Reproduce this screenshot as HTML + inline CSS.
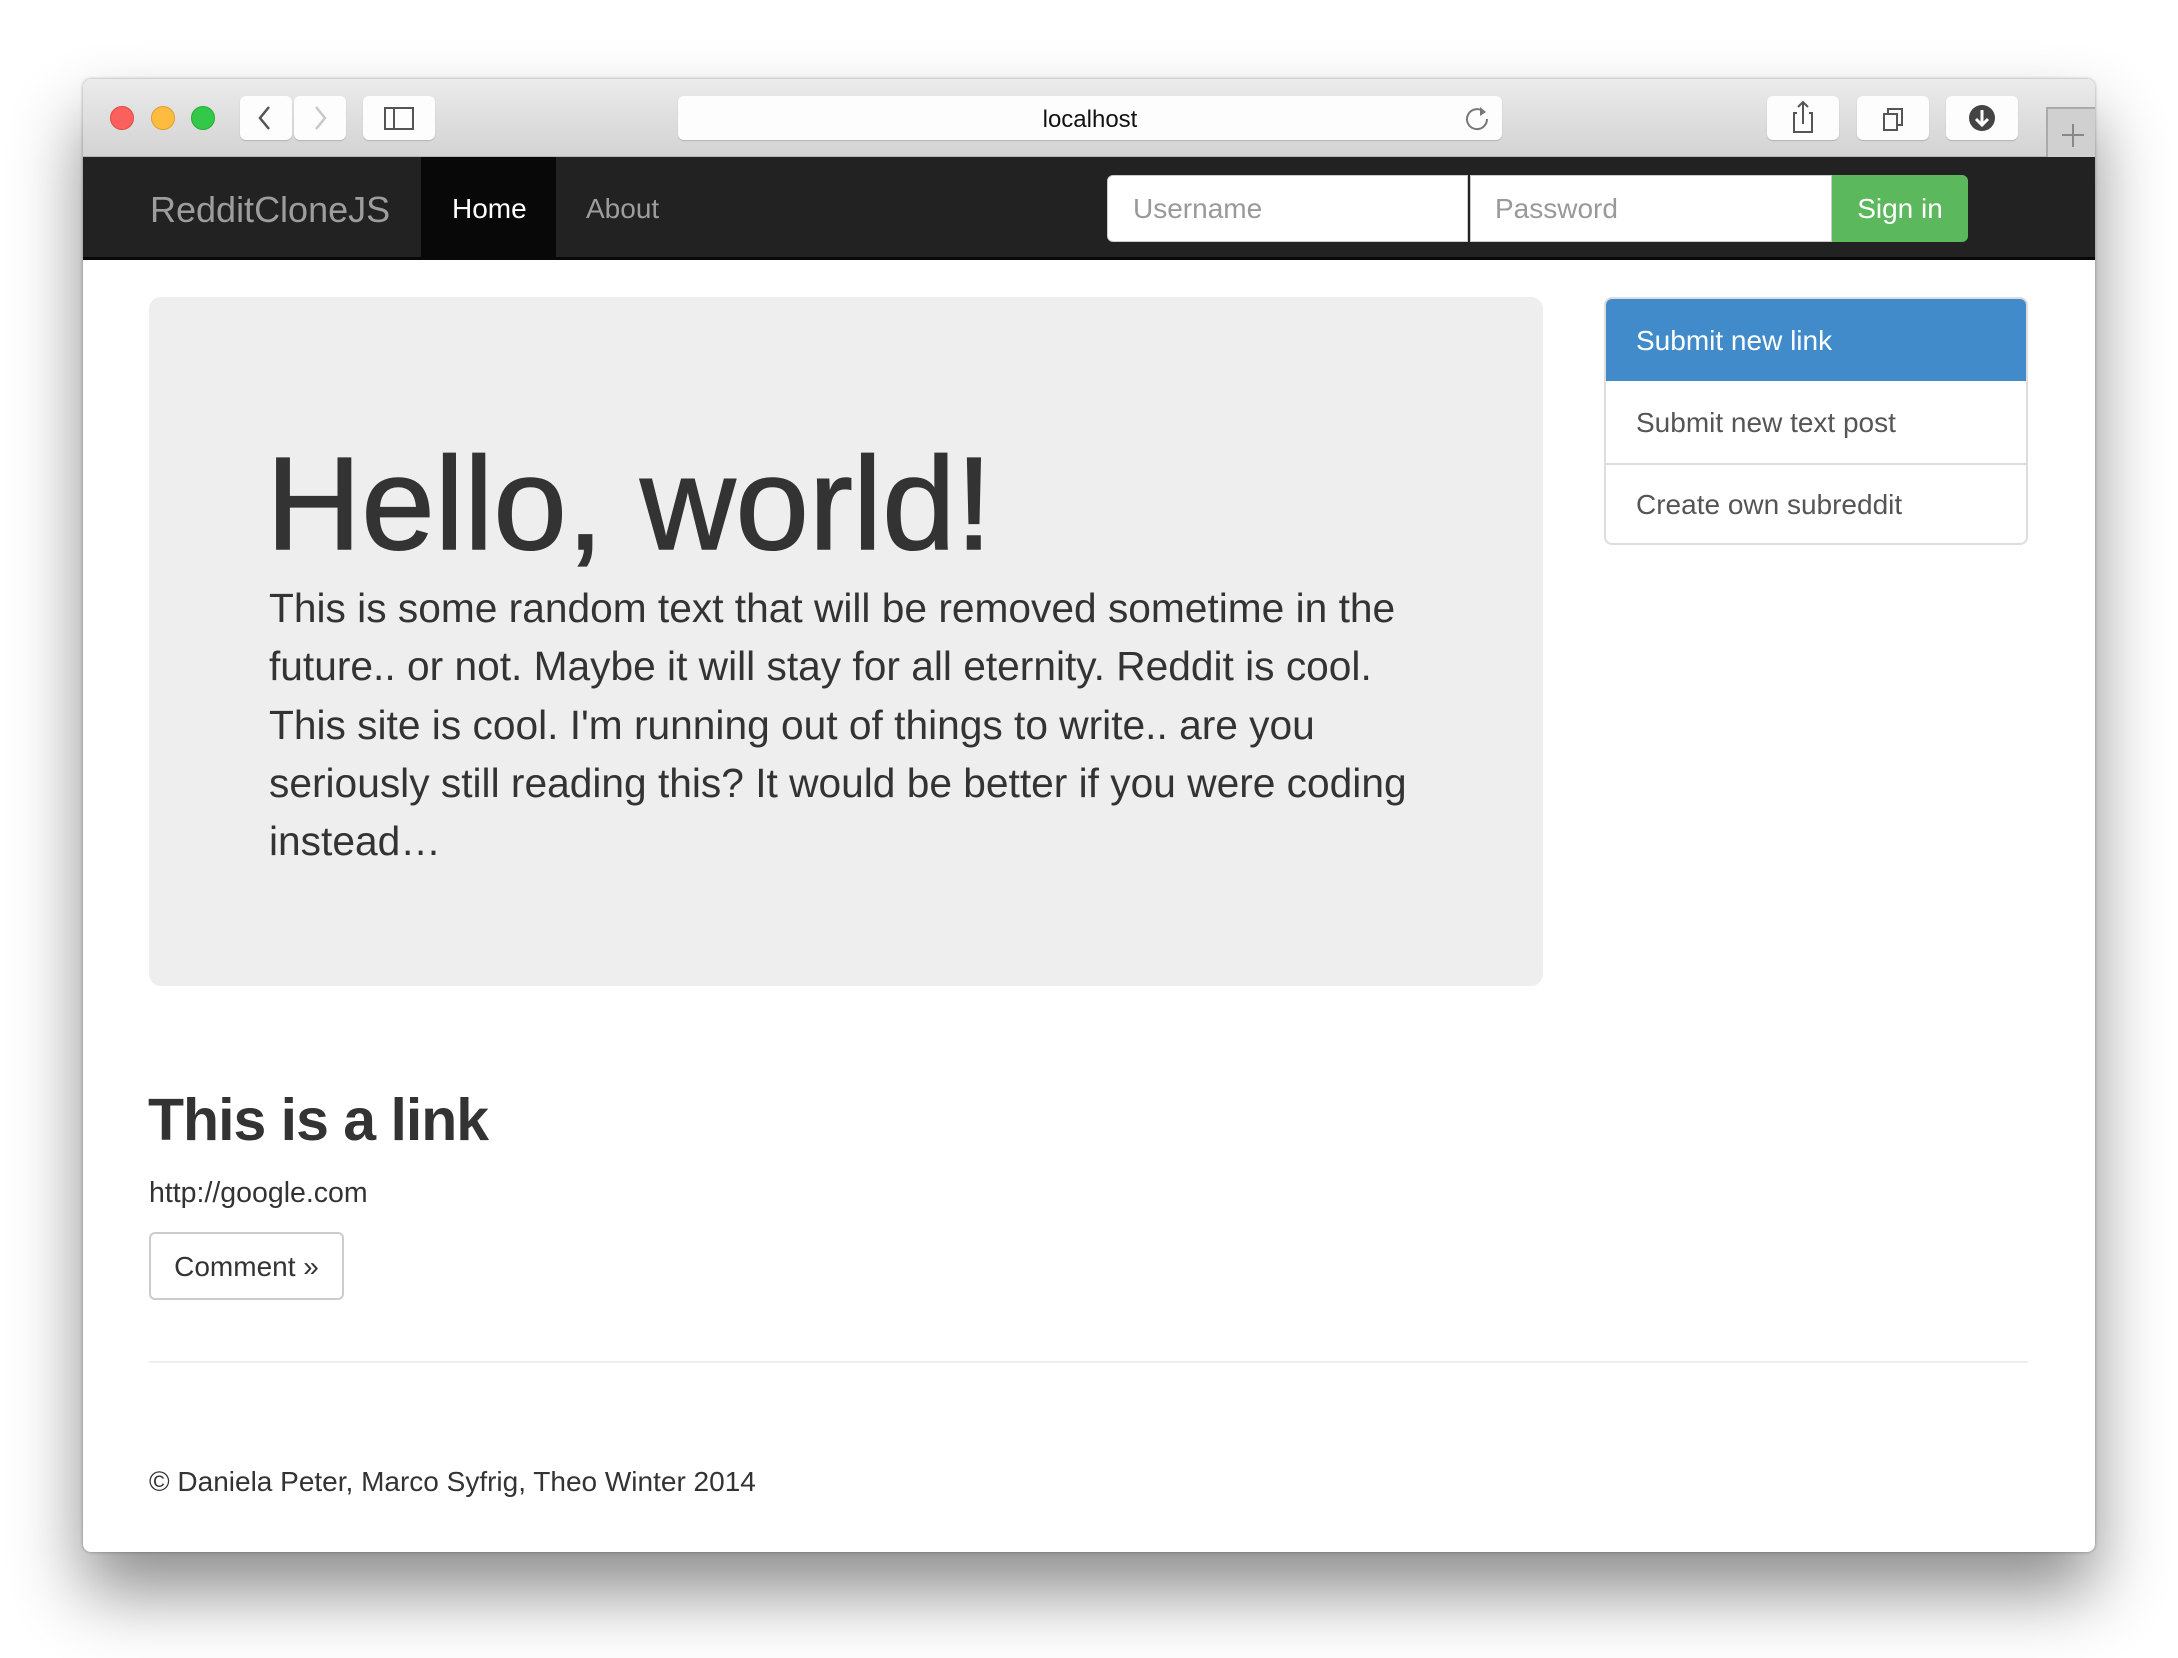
<!DOCTYPE html>
<html><head><meta charset="utf-8"><style>
*{margin:0;padding:0;box-sizing:border-box}
body{width:2178px;height:1658px;background:#fff;position:relative;overflow:hidden;font-family:"Liberation Sans",Arial,sans-serif;color:#333}
.a{position:absolute;white-space:nowrap;line-height:1}
#win{position:absolute;left:83px;top:79px;width:2012px;height:1473px;background:#fff;border-radius:8px;box-shadow:0 40px 70px rgba(0,0,0,.45),0 0 3px rgba(0,0,0,.35);overflow:hidden}
#tb{position:absolute;left:0;top:0;width:100%;height:78px;background:linear-gradient(#ebebeb,#d3d3d3);border-bottom:1px solid #b5b5b5}
.dot{position:absolute;width:24px;height:24px;border-radius:50%;top:27px}
.btn{position:absolute;top:17px;height:44px;background:#fdfdfd;border-radius:6px;box-shadow:0 1px 1px rgba(0,0,0,.18)}
#nav{position:absolute;left:0;top:78px;width:100%;height:103px;background:#222;border-bottom:3px solid #080808}
</style></head><body>
<div id="win">
 <div id="tb">
  <div class="dot" style="left:27px;background:#fc605c;border:1px solid #de4a45"></div>
  <div class="dot" style="left:68px;background:#fdbc40;border:1px solid #de9e2c"></div>
  <div class="dot" style="left:108px;background:#34c84a;border:1px solid #26a934"></div>
  <div class="btn" style="left:157px;width:52px"><svg width="52" height="44"><path d="M29 11 L20 22 L29 33" stroke="#555" stroke-width="2.5" fill="none"/></svg></div>
  <div class="btn" style="left:211px;width:52px"><svg width="52" height="44"><path d="M22 11 L31 22 L22 33" stroke="#c8c8c8" stroke-width="2.5" fill="none"/></svg></div>
  <div class="btn" style="left:280px;width:72px"><svg width="72" height="44"><rect x="22" y="12" width="28" height="21" stroke="#555" stroke-width="2" fill="none"/><line x1="31" y1="12" x2="31" y2="33" stroke="#555" stroke-width="2"/></svg></div>
  <div class="btn" style="left:595px;width:824px"></div>
  <div class="a" style="left:595px;width:824px;text-align:center;top:29px;font-size:24px;color:#111">localhost</div>
  <svg class="a" style="left:1380px;top:25px" width="30" height="30"><path d="M21 8 A10 10 0 1 0 24 15" stroke="#777" stroke-width="2" fill="none"/><path d="M17 3 L23 8 L17 12" fill="#777"/></svg>
  <div class="btn" style="left:1684px;width:72px"><svg width="72" height="44"><path d="M30 17 H27 V36 H45 V17 H42 M36 28 V6 M31 11 L36 6 L41 11" stroke="#555" stroke-width="2" fill="none"/></svg></div>
  <div class="btn" style="left:1774px;width:72px"><svg width="72" height="44"><rect x="27" y="18" width="13" height="16" stroke="#555" stroke-width="2" fill="none"/><path d="M31 18 V13 H45 V29 H40" stroke="#555" stroke-width="2" fill="none"/></svg></div>
  <div class="btn" style="left:1863px;width:72px"><svg width="72" height="44"><circle cx="36" cy="22" r="13" fill="#444"/><path d="M36 14 V28 M30 23 L36 29 L42 23" stroke="#fff" stroke-width="3" fill="none"/></svg></div>
  <div style="position:absolute;left:1963px;top:28px;width:60px;height:50px;border:2px solid #aaa;border-bottom:none;background:#d0d0d0"><svg width="50" height="50"><path d="M25 15 V38 M14 26 H36" stroke="#888" stroke-width="2"/></svg></div>
 </div>
 <div id="nav">
  <div class="a" style="left:67px;top:35px;font-size:36px;color:#9d9d9d">RedditCloneJS</div>
  <div style="position:absolute;left:338px;top:0;width:135px;height:100px;background:#080808"></div>
  <div class="a" style="left:369px;top:38px;font-size:28px;color:#fff">Home</div>
  <div class="a" style="left:503px;top:38px;font-size:28px;color:#9d9d9d">About</div>
  <div style="position:absolute;left:1024px;top:18px;width:361px;height:67px;background:#fff;border:1px solid #ccc;border-radius:6px 0 0 6px"></div>
  <div class="a" style="left:1050px;top:38px;font-size:28px;color:#999">Username</div>
  <div style="position:absolute;left:1387px;top:18px;width:362px;height:67px;background:#fff;border:1px solid #ccc"></div>
  <div class="a" style="left:1412px;top:38px;font-size:28px;color:#999">Password</div>
  <div style="position:absolute;left:1749px;top:18px;width:136px;height:67px;background:#5cb85c;border-radius:0 6px 6px 0"></div>
  <div class="a" style="left:1749px;width:136px;text-align:center;top:38px;font-size:28px;color:#fff">Sign in</div>
 </div>
 <div style="position:absolute;left:66px;top:218px;width:1394px;height:689px;background:#eee;border-radius:12px"></div>
 <div class="a" style="left:183px;top:359px;font-size:132px;color:#333;-webkit-text-stroke:1.5px #333">Hello, world!</div>
 <div class="a" style="left:186px;top:500px;font-size:40.7px;line-height:58.3px;color:#333">This is some random text that will be removed sometime in the<br>future.. or not. Maybe it will stay for all eternity. Reddit is cool.<br>This site is cool. I'm running out of things to write.. are you<br>seriously still reading this? It would be better if you were coding<br>instead…</div>
 <div style="position:absolute;left:1521px;top:218px;width:424px;height:248px;border:2px solid #ddd;border-radius:8px;overflow:hidden">
  <div style="height:84px;background:#428bca;margin:-2px -2px 0"></div>
  <div style="position:absolute;left:0;top:164px;width:100%;border-top:2px solid #ddd"></div>
 </div>
 <div class="a" style="left:1553px;top:248px;font-size:28px;color:#fff">Submit new link</div>
 <div class="a" style="left:1553px;top:330px;font-size:28px;color:#555">Submit new text post</div>
 <div class="a" style="left:1553px;top:412px;font-size:28px;color:#555">Create own subreddit</div>
 <div class="a" style="left:65px;top:1012px;font-size:59px;font-weight:bold;letter-spacing:-1px;color:#333">This is a link</div>
 <div class="a" style="left:66px;top:1100px;font-size:28.5px;color:#333">http://google.com</div>
 <div style="position:absolute;left:66px;top:1153px;width:195px;height:68px;border:2px solid #ccc;border-radius:6px"></div>
 <div class="a" style="left:66px;width:195px;text-align:center;top:1174px;font-size:28px;color:#333">Comment »</div>
 <div style="position:absolute;left:66px;top:1282px;width:1879px;border-top:2px solid #eee"></div>
 <div class="a" style="left:66px;top:1389px;font-size:28px;color:#333">© Daniela Peter, Marco Syfrig, Theo Winter 2014</div>
</div>
</body></html>
